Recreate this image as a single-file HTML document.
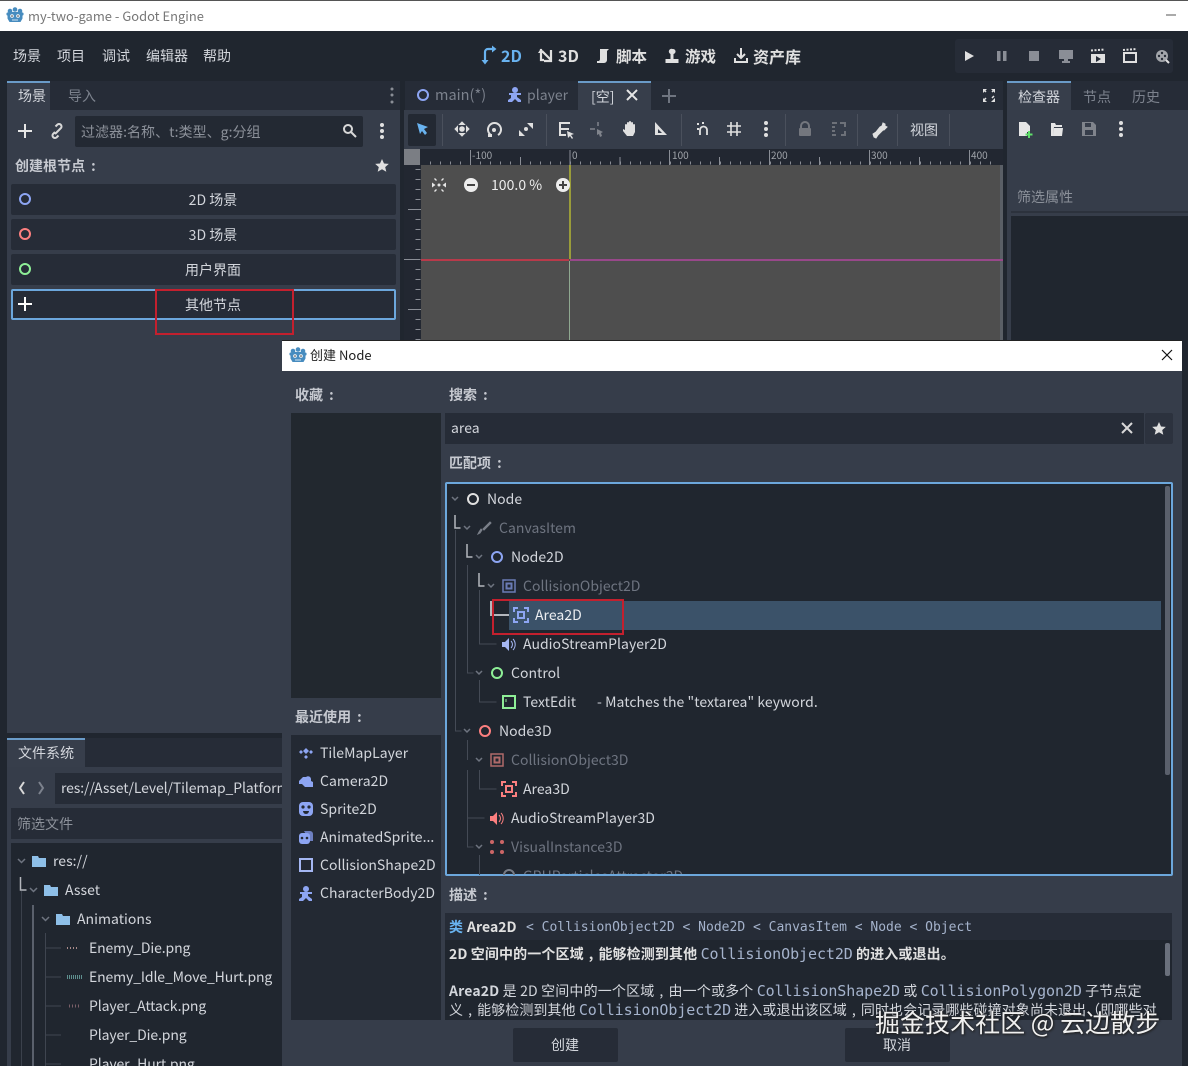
<!DOCTYPE html>
<html><head><meta charset="utf-8"><title>my-two-game - Godot Engine</title>
<style>
html,body{margin:0;padding:0;background:#20262f}
#r{position:relative;width:1188px;height:1066px;overflow:hidden;background:#20262f;font-family:"Noto Sans CJK SC","Liberation Sans",sans-serif}
.b{position:absolute}
.t{position:absolute;white-space:nowrap;line-height:20px;height:20px;font-size:14px;color:#d3d6dc;letter-spacing:.03px}
.d{color:#7c828d}.g{color:#6e7480}.w{color:#eceef1}.s{font-weight:700;color:#c6c9d0}
.c{transform:translateX(-50%)}
.f{letter-spacing:-.12px}
.m{font-family:"DejaVu Sans Mono","Liberation Mono",monospace;letter-spacing:0}
.l{font-weight:400;color:#a5b3cc;font-size:15px;letter-spacing:-.08px}
.k{margin-left:6px}
.q{font-style:normal;margin:0 5px}
svg{position:absolute;left:0;top:0}
</style></head><body><div id="r">

<div class="b" style="left:0;top:0;width:1188px;height:31px;background:#fff;border-top:1px solid #555;box-sizing:border-box"></div>
<div class="b" style="left:955px;top:39px;width:218px;height:34px;background:#262c37;border-radius:3px"></div>

<div class="b" style="left:7px;top:81px;width:393px;height:29px;background:#262c37"></div>
<div class="b" style="left:7px;top:81px;width:43px;height:29px;background:#373e4b;border-top:2px solid #6a9bc8;box-sizing:border-box"></div>
<div class="b" style="left:7px;top:110px;width:393px;height:623px;background:#363d4a"></div>
<div class="b" style="left:75px;top:116px;width:288px;height:31px;background:#232933;border-radius:2px"></div>
<div class="b" style="left:11px;top:184px;width:385px;height:31px;background:#262c37;border-radius:2px"></div>
<div class="b" style="left:11px;top:219px;width:385px;height:31px;background:#262c37;border-radius:2px"></div>
<div class="b" style="left:11px;top:254px;width:385px;height:31px;background:#262c37;border-radius:2px"></div>
<div class="b" style="left:11px;top:289px;width:385px;height:31px;background:#262c37;border:2px solid #6ca7dc;border-radius:2px;box-sizing:border-box"></div>
<div class="b" style="left:155px;top:289px;width:139px;height:46px;border:2px solid #c3202e;box-sizing:border-box"></div>

<div class="b" style="left:405px;top:81px;width:598px;height:29px;background:#262c37"></div>
<div class="b" style="left:578px;top:81px;width:73px;height:29px;background:#373e4b;border-top:2px solid #6a9bc8;box-sizing:border-box"></div>
<div class="b" style="left:404px;top:110px;width:599px;height:39px;background:#363d4a"></div>
<div class="b" style="left:408px;top:114px;width:28px;height:32px;background:#232933;border-radius:2px"></div>
<div class="b" style="left:404px;top:149px;width:599px;height:16px;background:#222731"></div>
<div class="b" style="left:404px;top:149px;width:16px;height:16px;background:#7b7e84"></div>
<div class="b" style="left:404px;top:165px;width:17px;height:176px;background:#222731"></div>
<div class="b" style="left:421px;top:165px;width:579px;height:176px;background:#4e4e4e"></div>
<div class="b" style="left:1000px;top:165px;width:3px;height:176px;background:#5a5f66"></div>
<div class="b" style="left:421px;top:259px;width:148px;height:2px;background:#b83a4a"></div>
<div class="b" style="left:570px;top:259px;width:433px;height:2px;background:#98488a"></div>
<div class="b" style="left:569px;top:165px;width:2px;height:94px;background:#9a9c3a"></div>
<div class="b" style="left:569px;top:261px;width:1px;height:80px;background:#8fa890"></div>

<div class="b" style="left:1007px;top:81px;width:181px;height:29px;background:#262c37"></div>
<div class="b" style="left:1007px;top:81px;width:64px;height:29px;background:#373e4b;border-top:2px solid #6a9bc8;box-sizing:border-box"></div>
<div class="b" style="left:1007px;top:110px;width:181px;height:231px;background:#363d4a"></div>
<div class="b" style="left:1011px;top:211px;width:177px;height:2px;background:#2c323d"></div>
<div class="b" style="left:1011px;top:216px;width:177px;height:125px;background:#20262f"></div>

<div class="b" style="left:7px;top:738px;width:275px;height:29px;background:#262c37"></div>
<div class="b" style="left:7px;top:738px;width:78px;height:29px;background:#373e4b;border-top:2px solid #6a9bc8;box-sizing:border-box"></div>
<div class="b" style="left:7px;top:767px;width:275px;height:299px;background:#363d4a"></div>
<div class="b" style="left:55px;top:773px;width:227px;height:31px;background:#262c37"></div>
<div class="b" style="left:11px;top:808px;width:271px;height:31px;background:#262c37"></div>
<div class="b" style="left:11px;top:843px;width:271px;height:223px;background:#20262f"></div>

<svg width="1188" height="1066" fill="none">
<defs><g id="logo"><g fill="#478cbf"><path d="M-6-3h12l1.500 1.500v5l-2 3.500h-11l-2-3.500v-5z"/><circle cx="-5" cy="-4" r="2.300"/><circle cx="5" cy="-4" r="2.300"/><circle cx="0" cy="-5.500" r="2.300"/><circle cx="-7" cy="-1" r="1.600"/><circle cx="7" cy="-1" r="1.600"/></g><circle cx="-3" cy="1" r="1.800" fill="#fff"/><circle cx="3" cy="1" r="1.800" fill="#fff"/><circle cx="-3" cy="1" r=".8" fill="#333"/><circle cx="3" cy="1" r=".8" fill="#333"/><path d="M-3 5h6" stroke="#cfe2f2"/></g>
<g id="body"><circle cx="0" cy="-5" r="3"/><path d="M-6-2h12v2h-4v2l4 3v2h-3l-3-3-3 3h-4v-2l3-2v-3h-2z"/></g></defs>
<use href="#logo" x="15" y="15"/>
<path d="M1166 15h10" stroke="#555"/>

<!-- main bar icons -->
<g stroke="#69b3f0" stroke-width="2.200"><path d="M485 62V52a3 3 0 0 1 3-3h5"/></g><path d="M481.500 60h7l-3.500 4.500zM492 45.500v7l4.500-3.500z" fill="#69b3f0"/>
<g stroke="#e0e0e0" stroke-width="2.200"><path d="M541 49v11h3M542 51l9 9M551 50v11h-7"/></g><path d="M538 53l3-4.500 3 4.500z" fill="#e0e0e0"/>
<path d="M600 49h9l-2 2v9a3 3 0 0 1-3 3h-7v-2h2a2 2 0 0 0 1-2z" fill="#e0e0e0"/>
<path d="M672.500 49a2.500 2.500 0 0 1 1 5v5h5v4h-13v-4h5v-5a2.500 2.500 0 0 1 2-5z" fill="#e0e0e0"/>
<g stroke="#e0e0e0" stroke-width="2"><path d="M741 48v10M737 54l4 4 4-4M735 58v4h12v-4"/></g>

<g fill="#e0e0e0"><path d="M965 51l9 5-9 5z"/></g>
<g fill="#8a8e96"><rect x="997" y="51" width="3.500" height="10"/><rect x="1003" y="51" width="3.500" height="10"/><rect x="1029" y="51" width="10" height="10"/><path d="M1059 50h14v9h-5v2h2v2h-8v-2h2v-2h-5z"/></g>
<g fill="#e0e0e0"><path d="M1091 54h14v9h-14z"/></g><path d="M1091 50.500l14-1" stroke="#e0e0e0" stroke-width="2" stroke-dasharray="2 1.500"/><path d="M1096 56l5 3-5 3z" fill="#262c37"/>
<path d="M1124 53h12v9h-12z" stroke="#e0e0e0" stroke-width="2"/><path d="M1123 50l14-1" stroke="#e0e0e0" stroke-width="2" stroke-dasharray="2 1.500"/>
<circle cx="1162" cy="56" r="6" fill="#a3a6ab"/><g fill="#262c37"><circle cx="1162" cy="53" r="1.200"/><circle cx="1162" cy="59" r="1.200"/><circle cx="1159" cy="56" r="1.200"/><circle cx="1165" cy="56" r="1.200"/></g><path d="M1166 60l3 3" stroke="#e0e0e0" stroke-width="2"/>

<!-- scene dock -->
<g fill="#8a8e96"><circle cx="392" cy="89" r="1.500"/><circle cx="392" cy="95" r="1.500"/><circle cx="392" cy="102" r="1.500"/></g>
<path d="M25 124v14M18 131h14" stroke="#e6e6e6" stroke-width="2"/>
<g stroke="#d8d8d8" stroke-width="2"><path d="M55 132l-2 2a2.500 2.500 0 0 0 3.500 3.500l2-2M59 130l2-2a2.500 2.500 0 0 0-3.500-3.500l-2 2M55 134l5-5"/></g>
<g stroke="#d8d8d8" stroke-width="2"><circle cx="348" cy="129" r="4"/><path d="M351 132l5 5"/></g>
<g fill="#e0e0e0"><circle cx="382" cy="125" r="2"/><circle cx="382" cy="131" r="2"/><circle cx="382" cy="137" r="2"/></g>
<path d="M382 159l2 4.500 4.800.4-3.600 3.200 1.100 4.700-4.300-2.500-4.300 2.500 1.100-4.700-3.600-3.200 4.800-.4z" fill="#e0e0e0"/>
<circle cx="25" cy="199" r="5" stroke="#8da5f3" stroke-width="2"/>
<circle cx="25" cy="234" r="5" stroke="#fc7f7f" stroke-width="2"/>
<circle cx="25" cy="269" r="5" stroke="#8eef97" stroke-width="2"/>
<path d="M25 297v14M18 304h14" stroke="#fff" stroke-width="2"/>

<!-- scene tabs -->
<circle cx="423" cy="95" r="5" stroke="#8da5f3" stroke-width="2"/>
<use href="#body" x="515" y="95" fill="#8da5f3"/>
<path d="M627 90l10 10M637 90l-10 10" stroke="#e6e6e6" stroke-width="2"/>
<path d="M669 89v14M662 96h14" stroke="#6f7580" stroke-width="2"/>
<g stroke="#e0e0e0" stroke-width="1.500"><path d="M986 92l-2-2M992 92l2-2M986 98l-2 2M992 98l2-2"/></g>
<g fill="#e0e0e0"><path d="M983 89h4l-4 4zM995 89h-4l4 4zM983 102h4l-4-4zM995 102h-4l4-4z"/></g>

<!-- toolbar -->
<path d="M417 123l11 4-4 2 3 4-2 2-3-4-2 3z" fill="#69b3f0"/>
<g stroke="#4a505c"><path d="M442.500 114v32M546.500 114v32M681.500 114v32M785.500 114v32M857.500 114v32M897.500 114v32M949.500 114v32"/></g>
<circle cx="462" cy="129" r="2.800" fill="#e0e0e0"/><path d="M462 122l-2.500 2.500h5zM462 136l-2.500-2.500h5zM455 129l2.500-2.500v5zM469 129l-2.500-2.500v5z" fill="#e0e0e0" stroke="#e0e0e0"/>
<path d="M491 135a6.500 6.500 0 1 1 7 0" stroke="#e0e0e0" stroke-width="2"/><circle cx="494" cy="130" r="2" fill="#e0e0e0"/><path d="M488 134h4v3h-4z" fill="#e0e0e0"/>
<path d="M527 123h6v6zM519 130v6h6z" fill="#e0e0e0"/><circle cx="526" cy="129" r="2" fill="#e0e0e0"/>
<path d="M560 123h10M560 129h9M560 135h6M560 122v14" stroke="#e0e0e0" stroke-width="2"/><path d="M567 131l7 3-3 1 2 3-1 1-2-3-2 2z" fill="#e0e0e0"/>
<g stroke="#80848c" stroke-width="1.500"><path d="M598 122v4M590 129h5"/></g><path d="M597 129l6 3-2 1 1 3-2 1-1-3-2 1z" fill="#80848c"/>
<path d="M625 130v-5a1 1 0 0 1 2 0v-2a1 1 0 0 1 2 0v-1a1 1 0 0 1 2 0v1a1 1 0 0 1 2 0v2a1 1 0 0 1 2 0v7l-2 4h-6l-4-5v-2z" fill="#e0e0e0"/>
<path d="M655 122v13h12z" fill="#e0e0e0"/><path d="M658 129v4h4z" fill="#363d4a"/>
<g stroke="#e0e0e0" stroke-width="1.800"><path d="M700 135v-5a3.500 3.500 0 0 1 7 0v5"/></g><g fill="#e0e0e0"><rect x="697" y="123" width="2" height="2"/><rect x="702" y="122" width="2" height="2"/><rect x="697" y="128" width="2" height="2"/></g>
<path d="M731 122v14M737 122v14M727 126h14M727 132h14" stroke="#e0e0e0" stroke-width="1.600"/>
<g fill="#e0e0e0"><circle cx="766" cy="123" r="2"/><circle cx="766" cy="129" r="2"/><circle cx="766" cy="135" r="2"/></g>
<path d="M801 128v-2a4 4 0 0 1 8 0v2" stroke="#74777e" stroke-width="2"/><rect x="799" y="128" width="12" height="8" rx="1" fill="#74777e"/>
<path d="M832 123h5M832 127h3M832 131h3M832 135h4M840 123h5v4M845 131v4h-4" stroke="#6d7179" stroke-width="2"/>
<path d="M873 134l3-2 4-5 2-1 1-3 2 1 0 2 2 1-3 3-1 0-5 5-2 3-2-1z" fill="#e0e0e0" stroke="#e0e0e0"/>

<!-- ruler -->
<g stroke="#8a8e96">
<path d="M470.500 150v15M570 150v15M669.500 150v15M769.500 150v15M869.500 150v15M969.500 150v15"/>
<path d="M520.500 157v8M620 157v8M719.500 157v8M819.500 157v8M919.500 157v8"/>
</g>
<path d="M421 165h579" stroke="#8a8e96" stroke-width="3" stroke-dasharray="1 9" stroke-dashoffset="1" transform="translate(0,-2)"/>
<path d="M408 209.500h13M408 309.500h13" stroke="#8a8e96"/>
<path d="M418 165v176" stroke="#8a8e96" stroke-width="5" stroke-dasharray="1 9" transform="translate(0,4)"/>
<path d="M404 259.500h14" stroke="#8a8e96"/>
<g stroke="#e6e6e6" stroke-width="1.300"><path d="M434.500 178.500l2 2M443.500 178.500l-2 2M434.500 191.500l2-2M443.500 191.500l-2-2"/></g>
<g fill="#e6e6e6"><circle cx="439" cy="185" r="1.500"/><path d="M432 182.500l3.500 2.500-3.500 2.500zM446 182.500l-3.500 2.500 3.500 2.500z"/></g>
<circle cx="471" cy="185" r="7" fill="#eee"/><path d="M467 185h8" stroke="#444" stroke-width="2"/>
<circle cx="563" cy="185" r="7" fill="#eee"/><path d="M559 185h8M563 181v8" stroke="#444" stroke-width="2"/>

<!-- inspector -->
<path d="M1019 122h7l4 4v6h-3v4h-8z" fill="#e6e6e6"/><path d="M1029 131v7M1025.500 134.500h7" stroke="#5fe06a" stroke-width="2"/>
<path d="M1051 136v-13h4l1 2h6v2h-8l-1 9h-2zM1053 136l1-8h9l-1 8z" fill="#e6e6e6"/>
<path d="M1082 122h11l3 3v11h-14z" fill="#80848c"/><rect x="1085" y="123" width="6" height="4" fill="#363d4a"/><rect x="1085" y="130" width="8" height="5" fill="#363d4a"/>
<g fill="#e0e0e0"><circle cx="1121" cy="123" r="2"/><circle cx="1121" cy="129" r="2"/><circle cx="1121" cy="135" r="2"/></g>

<!-- fs -->
<path d="M24 782l-4 6 4 6" stroke="#d8d8d8" stroke-width="2"/><path d="M39 782l4 6-4 6" stroke="#7c828d" stroke-width="2"/>
<g stroke="#6e7480" stroke-width="1.500"><path d="M18 859l3.500 3.500 3.500-3.500M30 888l3.500 3.500 3.500-3.500M42 917l3.500 3.500 3.500-3.500"/></g>
<g fill="#8ebfe8"><path d="M32 856h6l1 2h7v9H32zM44 885h6l1 2h7v9H44zM56 914h6l1 2h7v9H56z"/></g>
<path d="M20.500 877v13h6" stroke="#b4b7bd" stroke-width="1.500"/>
<path d="M21.500 891v175" stroke="#3b414c"/>
<path d="M33 905v161" stroke="#6e7480" stroke-width="1.500"/>
<path d="M45.500 933v133M46 948h15M46 977h15M46 1006h15M46 1035h15M46 1064h15" stroke="#3f4550"/>
<path d="M67 948h12" stroke="#a88a8a" stroke-dasharray="1 2" stroke-width="2"/>
<path d="M67 977h16" stroke="#5e8f8f" stroke-width="4" stroke-dasharray="1 1"/>
<path d="M69 1006h12" stroke="#7a5f68" stroke-dasharray="1 2" stroke-width="3"/>
</svg>

<!-- dialog -->
<div class="b" style="left:282px;top:340px;width:900px;height:726px;background:#363d4a;border-top:1px solid #222"></div>
<div class="b" style="left:282px;top:341px;width:900px;height:30px;background:#fff"></div>
<div class="b" style="left:291px;top:413px;width:150px;height:285px;background:#22282f"></div>
<div class="b" style="left:291px;top:735px;width:150px;height:285px;background:#232933"></div>
<div class="b" style="left:445px;top:413px;width:699px;height:31px;background:#262c37"></div>
<div class="b" style="left:1145px;top:413px;width:28px;height:31px;background:#2c323e;border-radius:2px"></div>
<div class="b" style="left:445px;top:482px;width:728px;height:394px;background:#20262f;border:2px solid #6ca7dc;box-sizing:border-box;border-radius:2px"></div>
<div class="b" style="left:509px;top:601px;width:652px;height:29px;background:#3b5269"></div>
<div class="b" style="left:1165px;top:486px;width:5px;height:289px;background:#5a606c;border-radius:2px"></div>
<div class="b" style="left:445px;top:913px;width:727px;height:27px;background:#262c37"></div>
<div class="b" style="left:445px;top:940px;width:727px;height:80px;background:#20262f"></div>
<div class="b" style="left:1165px;top:943px;width:5px;height:33px;background:#6a707c;border-radius:2px"></div>
<div class="b" style="left:513px;top:1028px;width:105px;height:34px;background:#262c37;border-radius:2px"></div>
<div class="b" style="left:845px;top:1028px;width:105px;height:34px;background:#262c37;border-radius:2px"></div>

<svg width="1188" height="1066" fill="none">
<use href="#logo" x="298" y="355"/>
<path d="M1162 350l10 10M1172 350l-10 10" stroke="#111" stroke-width="1.200"/>
<path d="M1122 423l10 10M1132 423l-10 10" stroke="#d8d8d8" stroke-width="2"/>
<path d="M1159 422l2 4.500 4.800.4-3.600 3.200 1.100 4.700-4.300-2.500-4.300 2.500 1.100-4.700-3.600-3.200 4.800-.4z" fill="#e0e0e0"/>

<!-- recent icons -->
<g fill="#8da5f3"><path d="M306 749l3 3-3 3-3-3zM301 751l2 2-2 2-2-2 2-2M311 751l2 2-2 2-2-2 2-2M306 756l2 2-2 2-2-2z" transform="translate(0,-1)"/></g>
<path d="M299 781l4-4h3a3 3 0 0 1 5 2v2l2 1v5h-8l-3-3h-3z" fill="#8da5f3"/>
<rect x="299" y="802" width="14" height="14" rx="4" fill="#8da5f3"/><circle cx="303" cy="807" r="1.600" fill="#232933"/><circle cx="309" cy="807" r="1.600" fill="#232933"/><path d="M303 811a3 3 0 0 0 6 0z" fill="#232933"/>
<path d="M304 831h6a3 3 0 0 1 3 3v7h-3z" fill="#6d7fc0"/><rect x="299" y="833" width="11" height="11" rx="3" fill="#8da5f3"/><circle cx="302" cy="838" r="1.300" fill="#232933"/><circle cx="307" cy="838" r="1.300" fill="#232933"/>
<rect x="300" y="859" width="12" height="12" stroke="#a5b7f3" stroke-width="2"/>
<use href="#body" x="306" y="894" fill="#8da5f3"/>

<!-- tree -->
<g stroke="#6e7480" stroke-width="1.500">
<path d="M452 497l3 3 3-3M464 526l3 3 3-3M476 555l3 3 3-3M488 584l3 3 3-3M476 671l3 3 3-3M464 729l3 3 3-3M476 758l3 3 3-3M476 845l3 3 3-3"/>
</g>
<g stroke="#b4b7bd" stroke-width="1.500"><path d="M455 515v13h5.500M467 544v13h5.500M479 573v13h5.500"/><path d="M491 601v14h18" stroke-width="2"/></g>
<g stroke="#444a55"><path d="M479.500 590v54h17M467.500 565v108h6M479.500 680v22h17M455.500 530v201h6M467.500 740v20M479.500 770v19h17M467.500 770v48h17M467.500 818v29h6M479.500 855v20"/></g>
<circle cx="473" cy="499" r="5" stroke="#e0e0e0" stroke-width="2"/>
<path d="M479 532l2-3 1 1-2 3-2 1zM483 529l7-7 1 1-7 7z" fill="#7a7f89" stroke="#7a7f89"/>
<circle cx="497" cy="557" r="5" stroke="#8da5f3" stroke-width="2"/>
<rect x="503" y="580" width="12" height="12" stroke="#6a7bb5" stroke-width="1.500"/><rect x="506.500" y="583.500" width="5" height="5" stroke="#6a7bb5" stroke-width="2"/>
<g stroke="#8da5f3" stroke-width="2"><path d="M514 612v-4h4M524 608h4v4M528 618v4h-4M518 622h-4v-4"/><rect x="518" y="612" width="6" height="6"/></g>
<path d="M502 642h3l4-4v13l-4-4h-3z" fill="#a5b7f3"/><path d="M511 641a5 5 0 0 1 0 7M513 639a8 8 0 0 1 0 11" stroke="#a5b7f3"/>
<circle cx="497" cy="673" r="5" stroke="#8eef97" stroke-width="2"/>
<rect x="503" y="696" width="12" height="12" stroke="#8eef97" stroke-width="2"/><path d="M506 699v3" stroke="#8eef97"/>
<circle cx="485" cy="731" r="5" stroke="#fc7f7f" stroke-width="2"/>
<rect x="491" y="754" width="12" height="12" stroke="#b06a6a" stroke-width="1.500"/><rect x="494.500" y="757.500" width="5" height="5" stroke="#b06a6a" stroke-width="2"/>
<g stroke="#fc7f7f" stroke-width="2"><path d="M502 786v-4h4M512 782h4v4M516 792v4h-4M506 796h-4v-4"/><rect x="506" y="786" width="6" height="6"/></g>
<path d="M490 816h3l4-4v13l-4-4h-3z" fill="#fc7f7f"/><path d="M499 815a5 5 0 0 1 0 7M501 813a8 8 0 0 1 0 11" stroke="#fc7f7f"/>
<g fill="#c66"><circle cx="492" cy="842" r="2"/><circle cx="502" cy="842" r="2"/><circle cx="492" cy="852" r="2"/><circle cx="502" cy="852" r="2"/></g>
<path d="M504 875a5 5 0 0 1 10 0" stroke="#777c86" stroke-width="2"/>
</svg>

<!-- main text -->
<div class="t g" style="left:28px;top:6px;font-size:12.900px;color:#777">my-two-game - Godot Engine</div>
<div class="t" style="left:13px;top:46px">场景</div><div class="t" style="left:57px;top:46px">项目</div><div class="t" style="left:102px;top:46px">调试</div><div class="t" style="left:146px;top:46px">编辑器</div><div class="t" style="left:203px;top:46px">帮助</div>
<div class="t" style="left:501px;top:45px;font-size:16px;font-weight:700;color:#69b3f0">2D</div>
<div class="t" style="left:558px;top:45px;font-size:16px;font-weight:700;color:#e0e0e0">3D</div>
<div class="t" style="left:616px;top:46px;font-size:15.500px;font-weight:700;color:#e0e0e0">脚本</div>
<div class="t" style="left:685px;top:46px;font-size:15.500px;font-weight:700;color:#e0e0e0">游戏</div>
<div class="t" style="left:753px;top:46px;font-size:16px;font-weight:700;color:#e0e0e0">资产库</div>
<div class="t" style="left:18px;top:86px">场景</div><div class="t d" style="left:68px;top:86px">导入</div>
<div class="t d" style="left:81px;top:122px;color:#8c919a">过滤器:名称、t:类型、g:分组</div>
<div class="t s" style="left:15px;top:156px">创建根节点<span class="k">:</span></div>
<div class="t c" style="left:213px;top:190px">2D 场景</div><div class="t c" style="left:213px;top:225px">3D 场景</div><div class="t c" style="left:213px;top:260px">用户界面</div><div class="t c" style="left:213px;top:295px">其他节点</div>
<div class="t d" style="left:435px;top:85px;font-size:14.500px">main(*)</div><div class="t d" style="left:527px;top:85px;font-size:14px">player</div><div class="t" style="left:591px;top:87px">[空]</div>
<div class="t" style="left:910px;top:120px">视图</div>
<div class="t" style="left:1018px;top:87px">检查器</div><div class="t d" style="left:1083px;top:87px">节点</div><div class="t d" style="left:1132px;top:87px">历史</div>
<div class="t d" style="left:1017px;top:187px;color:#8c919a">筛选属性</div>
<div class="t" style="left:472px;top:145px;font-size:10px;color:#a0a4aa">-100</div><div class="t" style="left:572px;top:145px;font-size:10px;color:#a0a4aa">0</div><div class="t" style="left:672px;top:145px;font-size:10px;color:#a0a4aa">100</div><div class="t" style="left:771px;top:145px;font-size:10px;color:#a0a4aa">200</div><div class="t" style="left:871px;top:145px;font-size:10px;color:#a0a4aa">300</div><div class="t" style="left:971px;top:145px;font-size:10px;color:#a0a4aa">400</div>
<div class="t" style="left:491px;top:175px;color:#eee">100.0 %</div>

<div class="t" style="left:18px;top:743px">文件系统</div>
<div class="b" style="left:61px;top:778px;width:221px;height:20px;overflow:hidden"><div class="t f" style="left:0;top:0">res://Asset/Level/Tilemap_Platform</div></div>
<div class="t d" style="left:17px;top:814px;color:#8c919a">筛选文件</div>
<div class="t" style="left:53px;top:851px">res://</div><div class="t" style="left:65px;top:880px">Asset</div><div class="t" style="left:77px;top:909px">Animations</div>
<div class="t f" style="left:89px;top:938px">Enemy_Die.png</div><div class="t f" style="left:89px;top:967px">Enemy_Idle_Move_Hurt.png</div><div class="t f" style="left:89px;top:996px">Player_Attack.png</div><div class="t f" style="left:89px;top:1025px">Player_Die.png</div><div class="t f" style="left:89px;top:1054px">Player_Hurt.png</div>

<!-- dialog text -->
<div class="t" style="left:310px;top:345px;font-size:13px;color:#222">创建 Node</div>
<div class="t s" style="left:295px;top:385px">收藏<span class="k">:</span></div><div class="t s" style="left:449px;top:385px">搜索<span class="k">:</span></div><div class="t s" style="left:449px;top:453px">匹配项<span class="k">:</span></div><div class="t s" style="left:295px;top:707px">最近使用<span class="k">:</span></div><div class="t s" style="left:449px;top:885px">描述<span class="k">:</span></div>
<div class="t" style="left:451px;top:418px">area</div>
<div class="t" style="left:320px;top:743px">TileMapLayer</div><div class="t" style="left:320px;top:771px">Camera2D</div><div class="t" style="left:320px;top:799px">Sprite2D</div><div class="t" style="left:320px;top:827px">AnimatedSprite...</div><div class="t" style="left:320px;top:855px">CollisionShape2D</div><div class="t" style="left:320px;top:883px">CharacterBody2D</div>
<div class="t" style="left:487px;top:489px">Node</div><div class="t g" style="left:499px;top:518px">CanvasItem</div><div class="t" style="left:511px;top:547px">Node2D</div><div class="t g" style="left:523px;top:576px">CollisionObject2D</div><div class="t w" style="left:535px;top:605px">Area2D</div><div class="t" style="left:523px;top:634px">AudioStreamPlayer2D</div><div class="t" style="left:511px;top:663px">Control</div><div class="t" style="left:523px;top:692px">TextEdit</div><div class="t" style="left:597px;top:692px;letter-spacing:.05px">- Matches the "textarea" keyword.</div><div class="t" style="left:499px;top:721px">Node3D</div><div class="t g" style="left:511px;top:750px">CollisionObject3D</div><div class="t" style="left:523px;top:779px">Area3D</div><div class="t" style="left:511px;top:808px">AudioStreamPlayer3D</div><div class="t g" style="left:511px;top:837px">VisualInstance3D</div>
<div class="b" style="left:523px;top:868px;width:200px;height:6px;overflow:hidden"><div class="t g" style="left:0;top:-2px">GPUParticlesAttractor3D</div></div>

<div class="b" style="left:492px;top:599px;width:132px;height:36px;border:2px solid #c3202e;box-sizing:border-box"></div>

<div class="t" style="left:449px;top:917px;font-weight:700;color:#69b3f0">类</div><div class="t" style="left:467px;top:917px;font-weight:700;color:#e0e0e0">Area2D</div>
<div class="t m" style="left:526px;top:918px;font-size:13px;color:#a5b3cc">&lt; CollisionObject2D &lt; Node2D &lt; CanvasItem &lt; Node &lt; Object</div>
<div class="t" style="left:449px;top:944px;font-weight:700;color:#e0e0e0;letter-spacing:.12px">2D 空间中的一个区域<i class="q">,</i>能够检测到其他 <span class="m l">CollisionObject2D</span> 的进入或退出。</div>
<div class="t" style="left:449px;top:981px;letter-spacing:.16px"><b>Area2D</b> 是 2D 空间中的一个区域<i class="q">,</i>由一个或多个 <span class="m l">CollisionShape2D</span> 或 <span class="m l">CollisionPolygon2D</span> 子节点定</div>
<div class="b" style="left:449px;top:1000px;width:715px;height:20px;overflow:hidden"><div class="t" style="left:0;top:0;letter-spacing:.08px">义<i class="q">,</i>能够检测到其他 <span class="m l">CollisionObject2D</span> 进入或退出该区域<i class="q">,</i>同时也会记录哪些碰撞对象尚未退出（即哪些对</div></div>
<div class="t c" style="left:565px;top:1035px">创建</div><div class="t c" style="left:897px;top:1035px">取消</div>
<div class="t" style="left:875px;top:1007px;height:30px;line-height:30px;font-size:25px;color:#f0f0f0;text-shadow:0 0 2px #222,1px 1px 2px #222">掘金技术社区 @ 云边散步</div>

</div></body></html>
